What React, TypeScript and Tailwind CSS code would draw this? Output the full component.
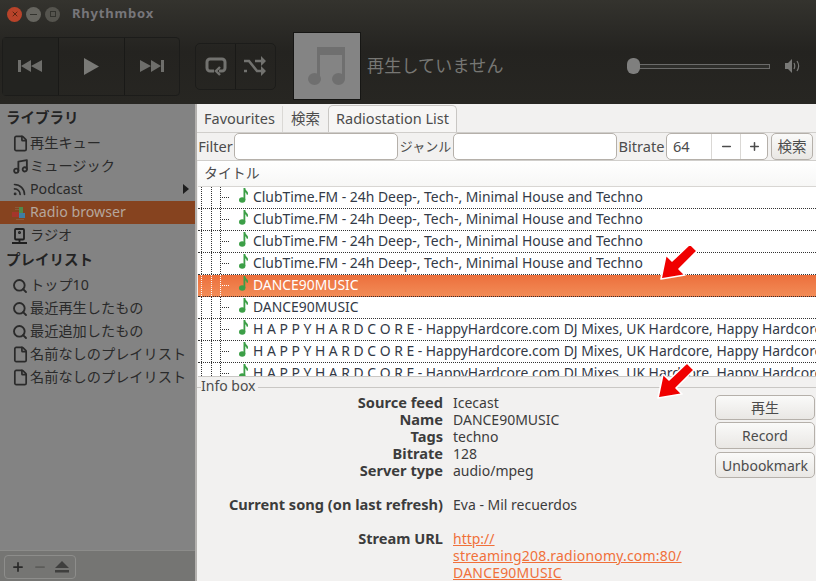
import { File, Music, Rss, Search, Plus, Minus, X } from "lucide-react";

const font = { fontFamily: '"Noto Sans", "Noto Sans CJK JP", sans-serif' };

const trackRows = [
  "ClubTime.FM - 24h Deep-, Tech-, Minimal House and Techno",
  "ClubTime.FM - 24h Deep-, Tech-, Minimal House and Techno",
  "ClubTime.FM - 24h Deep-, Tech-, Minimal House and Techno",
  "ClubTime.FM - 24h Deep-, Tech-, Minimal House and Techno",
  "DANCE90MUSIC",
  "DANCE90MUSIC",
  "H A P P Y H A R D C O R E - HappyHardcore.com DJ Mixes, UK Hardcore, Happy Hardcore",
  "H A P P Y H A R D C O R E - HappyHardcore.com DJ Mixes, UK Hardcore, Happy Hardcore",
  "H A P P Y H A R D C O R E - HappyHardcore.com DJ Mixes, UK Hardcore, Happy Hardcore",
];

function Note() {
  return (
    <svg width="9" height="16" viewBox="0 0 9 16" className="block">
      <ellipse cx="3.2" cy="13" rx="3.2" ry="2.8" fill="#3c9f47" />
      <path d="M5.4 13V1c0 2 1 3 2 4 .8.8 1.2 1.5 1 2.6" fill="none" stroke="#3c9f47" strokeWidth="1.8" />
    </svg>
  );
}

function SideItem({ icon, label, active, arrow }: { icon: React.ReactNode; label: string; active?: boolean; arrow?: boolean }) {
  return (
    <div className={`relative flex h-[23px] items-center pl-[12px] text-[14.2px] ${active ? "bg-[#86431f] text-[#b5a69c]" : "text-[#2a2a2a]"}`}>
      <span className="flex w-[18px] shrink-0 items-center justify-start">{icon}</span>
      <span className="-mt-[1px] whitespace-nowrap">{label}</span>
      {arrow && <span className="absolute right-[6px] top-[6px] h-0 w-0 border-y-[5px] border-l-[6px] border-y-transparent border-l-[#1e1e1e]" />}
    </div>
  );
}

function MediaButton({ width, dark, divider, children }: { width: string; dark?: boolean; divider?: boolean; children: React.ReactNode }) {
  return (
    <div className={`flex items-center justify-center ${width} ${dark ? "bg-[#232320]" : ""} ${divider ? "border-l border-[#191917]" : ""}`}>
      {children}
    </div>
  );
}

function Arrow({ className }: { className: string }) {
  return (
    <svg width="40" height="40" viewBox="0 0 40 40" className={`absolute ${className}`}>
      <path d="M2 37 L7 13 L13 19 L31 2 L38 9 L20 27 L26 33 Z" fill="#f00000" stroke="#ffffff" strokeWidth="1.6" strokeLinejoin="round" />
    </svg>
  );
}

function InfoRow({ label, value, className }: { label: string; value: React.ReactNode; className?: string }) {
  return (
    <div className={`flex h-[17px] items-center leading-[17px] ${className ?? ""}`}>
      <span className="w-[246px] whitespace-nowrap text-right text-[14.6px] font-bold">{label}</span>
      <span className="ml-[10px] whitespace-nowrap">{value}</span>
    </div>
  );
}

function PushButton({ label, className }: { label: string; className: string }) {
  return (
    <div className={`flex w-[100px] items-center justify-center rounded-[5px] border border-[#b5b0aa] bg-gradient-to-b from-[#fafaf9] to-[#e9e7e4] text-[14px] text-[#4c4c4c] ${className}`}>
      {label}
    </div>
  );
}

export default function App() {
  const dots = "border-[#333]";
  return (
    <div style={font} className="relative flex h-[581px] w-[816px] flex-col overflow-hidden bg-[#f2f1f0] text-[#3c3c3c]">
      {/* title bar + toolbar */}
      <div className="h-[104px] shrink-0 bg-gradient-to-b from-[#34332e] via-[#242320] to-[#272622]">
        <div className="flex h-[28px] items-center pl-[7px]">
          <span className="flex h-[15px] w-[15px] items-center justify-center rounded-full bg-[#b8432a]">
            <X size={8} strokeWidth={3} className="text-[#5a2410]" />
          </span>
          <span className="ml-[4px] flex h-[15px] w-[15px] items-center justify-center rounded-full bg-[#66655f]">
            <span className="h-px w-[7px] bg-[#33332e]" />
          </span>
          <span className="ml-[4px] flex h-[15px] w-[15px] items-center justify-center rounded-full bg-[#55544e]">
            <span className="h-[6px] w-[6px] border border-[#33332e]" />
          </span>
          <span className="ml-[12px] text-[13px] font-bold tracking-[0.8px] text-[#77767a]">Rhythmbox</span>
        </div>
        <div className="flex h-[76px] items-center pl-[2px]">
          <div className="flex h-[59px] rounded-[4px] border border-[#1c1c1a]">
            <MediaButton width="w-[55px]" dark>
              <svg width="25" height="14" viewBox="0 0 25 14" fill="#6e6e6b"><path d="M0 1h3v12H0zM3 7l10-6v12zM13 7l11-6v12z" /></svg>
            </MediaButton>
            <MediaButton width="w-[66px]" divider>
              <svg width="15" height="17" viewBox="0 0 15 17" fill="#7a7a77"><path d="M0 0l15 8.5L0 17z" /></svg>
            </MediaButton>
            <MediaButton width="w-[55px]" divider>
              <svg width="25" height="14" viewBox="0 0 25 14" fill="#6e6e6b"><path d="M0 1l11 6-11 6zM11 1l10 6-10 6zM21 1h3v12h-3z" /></svg>
            </MediaButton>
          </div>
          <div className="ml-[15px] flex h-[47px] rounded-[5px] border border-[#1c1c1a]">
            <MediaButton width="w-[39px]">
              <svg width="22" height="22" viewBox="0 0 22 22" fill="none" stroke="#72726f" strokeWidth="3"><path d="M9 16H5a3 3 0 0 1-3-3V7a3 3 0 0 1 3-3h12a3 3 0 0 1 3 3v6a3 3 0 0 1-3 3h-3" /><path d="M15 12l-4 4 4 4" strokeWidth="2.4" /></svg>
            </MediaButton>
            <MediaButton width="w-[40px]" divider>
              <svg width="23" height="22" viewBox="0 0 23 22" fill="none" stroke="#72726f" strokeWidth="2.6"><path d="M0 6h5l8 10h6M0 16h3M11 6h8" /><path d="M17 1l5 5-5 5zM17 11l5 5-5 5z" fill="#72726f" stroke="none" /></svg>
            </MediaButton>
          </div>
          <div className="ml-[17px] flex h-[68px] w-[68px] items-center justify-center border border-[#161614] bg-[#848484]">
            <svg width="38" height="38" viewBox="0 0 38 38" fill="#6f6f6f">
              <ellipse cx="6.5" cy="32" rx="6.5" ry="6" />
              <ellipse cx="30.5" cy="32" rx="6.5" ry="6" />
              <path d="M9 32V0h28v32h-3V8H12v24z" />
            </svg>
          </div>
          <span className="ml-[6px] text-[17px] tracking-[0.2px] text-[#777774]">再生していません</span>
          <div className="relative ml-[124px] h-[5px] w-[142px] border border-[#6b6b6a] bg-[#2f2f2c]">
            <span className="absolute -left-[2px] -top-[7px] h-[16px] w-[13px] rounded-[6px] bg-[#7f7f7e]" />
          </div>
          <svg width="16" height="14" viewBox="0 0 16 14" className="ml-[15px]" fill="#797977">
            <path d="M0 4h3l4-4v14l-4-4H0z" />
            <path d="M9 4c1 2 1 4 0 6M12 2c2 3 2 7 0 10" fill="none" stroke="#797977" strokeWidth="1.2" />
          </svg>
        </div>
      </div>

      <div className="flex min-h-0 flex-1">
        {/* sidebar, dimmed */}
        <div className="flex w-[197px] shrink-0 flex-col border-r-[2px] border-[#b3b1ae] bg-[#838383]">
          <div className="flex-1">
            <div className="flex h-[28px] items-center pl-[6px] text-[14.5px] font-bold text-[#232323]">ライブラリ</div>
            <SideItem icon={<File size={17} strokeWidth={2.4} />} label="再生キュー" />
            <SideItem icon={<Music size={17} strokeWidth={2.6} />} label="ミュージック" />
            <SideItem icon={<Rss size={15} strokeWidth={2.6} />} label="Podcast" arrow />
            <SideItem
              active
              label="Radio browser"
              icon={
                <svg width="16" height="16" viewBox="0 0 16 16">
                  <path d="M0 7h7v5H0z" fill="#a5352b" />
                  <path d="M7 2h4v6H7z" fill="#4f8a4b" />
                  <path d="M7 8h6v5H7z" fill="#3f7ea3" />
                  <path d="M3 2h4v1H3zM3 4h4v1H3zM4 14h8v1H4z" fill="#8a5a3a" />
                </svg>
              }
            />
            <SideItem
              label="ラジオ"
              icon={
                <svg width="15" height="16" viewBox="0 0 15 16" fill="none" stroke="#1f1f1f" strokeWidth="1.8">
                  <rect x="3" y="1" width="9" height="10.5" rx="1" />
                  <path d="M0 15h15M7.5 11.5V15" />
                  <circle cx="7.5" cy="4.5" r=".6" />
                </svg>
              }
            />
            <div className="flex h-[27px] items-center pb-[2px] pl-[6px] text-[14.5px] font-bold text-[#232323]">プレイリスト</div>
            <SideItem icon={<Search size={16} strokeWidth={2.8} />} label="トップ10" />
            <SideItem icon={<Search size={16} strokeWidth={2.8} />} label="最近再生したもの" />
            <SideItem icon={<Search size={16} strokeWidth={2.8} />} label="最近追加したもの" />
            <SideItem icon={<File size={17} strokeWidth={2.4} />} label="名前なしのプレイリスト" />
            <SideItem icon={<File size={17} strokeWidth={2.4} />} label="名前なしのプレイリスト" />
          </div>
          <div className="h-[31px] border-t border-[#8c8c8a] bg-[#757573] pl-[4px] pt-[4px]">
            <div className="flex h-[24px] w-[72px] items-center justify-around rounded-[4px] border border-[#8d8d8b] px-[2px]">
              <Plus size={14} strokeWidth={3} className="text-[#2a2a2a]" />
              <Minus size={14} strokeWidth={3} className="text-[#5c5c5a]" />
              <svg width="14" height="12" viewBox="0 0 14 12" fill="#3f3f3e"><path d="M7 0l7 7H0zM0 9h14v2.4H0z" /></svg>
            </div>
          </div>
        </div>

        {/* main */}
        <div className="flex min-w-0 flex-1 flex-col">
          <div className="flex h-[28px] shrink-0 items-end text-[14.5px]">
            <div className="flex h-[26px] w-[86px] items-center justify-center border-r border-[#dad8d5] text-[#4c4c4c]">Favourites</div>
            <div className="flex h-[26px] w-[45px] items-center justify-center text-[#4c4c4c]">検索</div>
            <div className="flex h-[27px] w-[129px] items-center justify-center whitespace-nowrap rounded-t-[5px] border border-b-0 border-[#c9c7c4] bg-[#f7f6f5] text-[#4c4c4c]">Radiostation List</div>
          </div>
          <div className="flex h-[29px] shrink-0 items-center whitespace-nowrap border-y border-[#d0cecb] text-[14.6px] text-[#4c4c4c]">
            <span className="w-[37px] text-center">Filter</span>
            <div className="h-[27px] w-[164px] rounded-[5px] border border-[#b5b0aa] bg-white" />
            <span className="w-[55px] text-center text-[13px]">ジャンル</span>
            <div className="h-[27px] w-[164px] rounded-[5px] border border-[#b5b0aa] bg-white" />
            <span className="w-[49px] text-center">Bitrate</span>
            <div className="flex h-[27px] w-[102px] items-center rounded-[5px] border border-[#b5b0aa] bg-white">
              <span className="w-[44px] pl-[6px]">64</span>
              <span className="flex h-full w-[29px] items-center justify-center border-l border-[#dad8d5]"><Minus size={13} strokeWidth={2.8} /></span>
              <span className="flex h-full w-[27px] items-center justify-center border-l border-[#dad8d5]"><Plus size={13} strokeWidth={2.8} /></span>
            </div>
            <div className="ml-[3px] flex h-[27px] w-[42px] items-center justify-center rounded-[5px] border border-[#b5b0aa] bg-gradient-to-b from-[#fafaf9] to-[#e9e7e4]">検索</div>
          </div>

          {/* tree */}
          <div className="ml-[1px] h-[216px] shrink-0 overflow-hidden border-b border-[#c9c7c4] bg-white text-[13.9px]">
            <div className="flex h-[26px] items-center border-b border-[#d8d6d3] bg-gradient-to-b from-white to-[#f7f7f6] pl-[6px] text-[#4c4c4c]">タイトル</div>
            {trackRows.map((name, i) => (
              <div
                key={i}
                className={`flex h-[22px] items-center whitespace-nowrap border-b border-dotted border-[#333] ${i === 4 ? "bg-gradient-to-b from-[#ec6f3c] to-[#f28b56] text-white" : "text-[#333a47]"}`}
              >
                <span className={`ml-[3px] h-full shrink-0 border-l border-dotted ${i === 4 ? "border-white" : dots}`} />
                <span className={`ml-[9px] h-full shrink-0 border-l border-dotted ${i === 4 ? "border-white" : dots}`} />
                <span className={`ml-[8px] h-full shrink-0 border-l border-dotted ${i === 4 ? "border-white" : dots}`} />
                <span className={`ml-[1px] w-[7px] shrink-0 border-t border-dotted ${i === 4 ? "border-white" : dots}`} />
                <span className="-mt-[5px] ml-[10px] shrink-0"><Note /></span>
                <span className="-mt-[1px] ml-[5px] shrink-0">{name}</span>
              </div>
            ))}
          </div>

          {/* info box */}
          <div className="relative mt-[10px] min-h-0 flex-1 border-t border-[#c9c7c4] pt-[6px] text-[14px] text-[#3c3c3c]">
            <span className="absolute -top-[11px] left-[4px] bg-[#f2f1f0] pr-[2px] text-[14px] leading-[18px] text-[#4c4c4c]">Info box</span>
            <div className="flex items-start">
              <div className="w-[516px] shrink-0">
                <InfoRow label="Source feed" value="Icecast" />
                <InfoRow label="Name" value="DANCE90MUSIC" />
                <InfoRow label="Tags" value="techno" />
                <InfoRow label="Bitrate" value="128" />
                <InfoRow label="Server type" value="audio/mpeg" />
                <InfoRow label="Current song (on last refresh)" value="Eva - Mil recuerdos" className="mt-[17px]" />
                <InfoRow
                  label="Stream URL"
                  className="mt-[17px]"
                  value={<span className="text-[#f0703a] underline">http://</span>}
                />
                <div className="ml-[256px] whitespace-nowrap tracking-[0.2px] text-[#f0703a] underline">
                  <div className="h-[17px] leading-[17px]">streaming208.radionomy.com:80/</div>
                  <div className="h-[17px] leading-[17px]">DANCE90MUSIC</div>
                </div>
              </div>
              <div className="ml-[2px] mt-[1px] flex flex-col">
                <PushButton label="再生" className="h-[25px]" />
                <PushButton label="Record" className="mt-[2px] h-[27px]" />
                <PushButton label="Unbookmark" className="mt-[3px] h-[26px]" />
              </div>
            </div>
          </div>
        </div>
      </div>

      <Arrow className="left-[659px] top-[242px]" />
      <Arrow className="left-[656px] top-[361px]" />
    </div>
  );
}
